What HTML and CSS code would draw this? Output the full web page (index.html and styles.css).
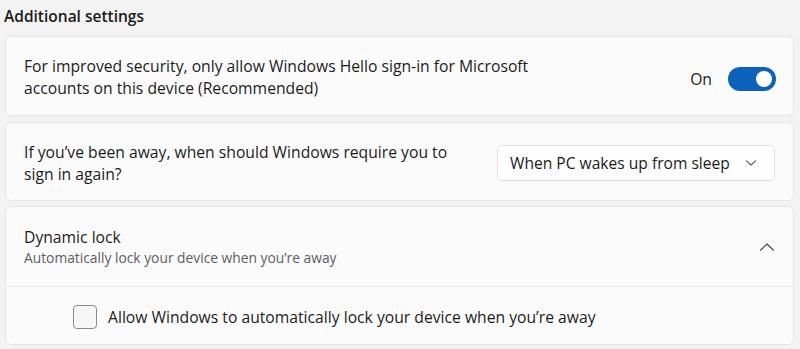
FILE: index.html
```html
<!DOCTYPE html>
<html>
<head>
<meta charset="utf-8">
<link rel="stylesheet" href="styles.css">
</head>
<body>
<div class="page">
  <h2 class="section-title">Additional settings</h2>
  <div class="card row">
    <div class="label">For improved security, only allow Windows Hello sign-in for Microsoft<br>accounts on this device (Recommended)</div>
    <div class="control">
      <span class="state">On</span>
      <span class="toggle"><span class="knob"></span></span>
    </div>
  </div>
  <div class="card row row2">
    <div class="label">If you’ve been away, when should Windows require you to<br>sign in again?</div>
    <div class="select">
      <span>When PC wakes up from sleep</span>
      <svg class="chev" width="12" height="8" viewBox="0 0 12 8"><path d="M1.5 1.8 L6 6 L10.5 1.8" fill="none" stroke="#5a5a5a" stroke-width="1.1" stroke-linecap="round" stroke-linejoin="round"/></svg>
    </div>
  </div>
  <div class="card expander">
    <div class="exp-head">
      <div>
        <div class="title">Dynamic lock</div>
        <div class="sub">Automatically lock your device when you’re away</div>
      </div>
      <svg class="chev-up" width="16" height="10" viewBox="0 0 16 10"><path d="M1.5 8.2 L8 2 L14.5 8.2" fill="none" stroke="#4a4a4a" stroke-width="1.2" stroke-linecap="round" stroke-linejoin="round"/></svg>
    </div>
    <div class="exp-body">
      <span class="checkbox"></span>
      <span class="check-label">Allow Windows to automatically lock your device when you’re away</span>
    </div>
  </div>
</div>
</body>
</html>
```

FILE: styles.css
```css
html, body {
  margin: 0;
  padding: 0;
  background: #f3f3f3;
}
body {
  font-family: "Open Sans", "Noto Sans", sans-serif;
  color: #1b1b1b;
  width: 800px;
  height: 349px;
  overflow: hidden;
}
.page {
  padding: 0 6px 0 5px;
}
.section-title {
  margin: 0;
  padding: 5px 0 0 0;
  margin-left: -1px;
  height: 32px;
  box-sizing: border-box;
  font-size: 15.5px;
  font-weight: 600;
  line-height: 22px;
  color: #1a1a1a;
}
.card {
  background: #fbfbfb;
  border: 1px solid #e6e6e6;
  border-radius: 6px;
  box-sizing: border-box;
}
.row {
  margin-top: 4px;
  height: 80px;
  display: flex;
  align-items: center;
  justify-content: space-between;
  padding: 0 17px 0 18px;
}
.row2 {
  margin-top: 6px;
  height: 79px;
  padding-right: 18px;
}
.label {
  font-size: 15.7px;
  line-height: 22px;
  margin-top: 2px;
}
.row2 .label {
  margin-top: 3px;
}
.control {
  display: flex;
  align-items: center;
  gap: 16px;
  margin-top: 6px;
}
.state {
  font-size: 15.7px;
}
.toggle {
  width: 48px;
  height: 24px;
  border-radius: 12px;
  background: #0a62bd;
  position: relative;
  display: inline-block;
}
.knob {
  position: absolute;
  right: 4px;
  top: 4px;
  width: 16px;
  height: 16px;
  border-radius: 50%;
  background: #fff;
}
.select {
  width: 278px;
  height: 36px;
  box-sizing: border-box;
  background: #fefefe;
  border: 1px solid #e4e4e4;
  border-bottom-color: #d6d6d6;
  border-radius: 5px;
  display: flex;
  align-items: center;
  justify-content: space-between;
  padding: 0 17px 0 12px;
  font-size: 15.6px;
  margin-top: 2px;
}
.expander {
  margin-top: 5px;
  height: 139px;
}
.exp-head {
  height: 79px;
  display: flex;
  align-items: center;
  justify-content: space-between;
  padding: 0 18px 0 18px;
  border-bottom: 1px solid #e8e8e8;
}
.title {
  font-size: 15.7px;
  line-height: 22px;
}
.sub {
  font-size: 13.8px;
  line-height: 19px;
  color: #5e5e5e;
}
.exp-body {
  display: flex;
  align-items: center;
  padding: 0 0 0 67px;
  height: 59px;
}
.checkbox {
  width: 22px;
  height: 22px;
  border: 1px solid #8a8a8a;
  border-radius: 4px;
  background: #f7f7f7;
  margin-right: 11px;
}
.check-label {
  font-size: 15.7px;
}
```
